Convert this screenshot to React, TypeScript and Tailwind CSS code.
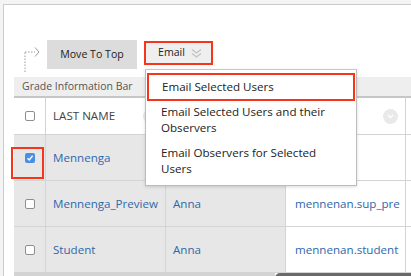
import React from "react";

type Row = {
  last: string;
  first?: string;
  user?: string;
  checked?: boolean;
  highlight?: boolean;
};

// row 1's first name / username sit under the open menu, so they are left empty
const rows: Row[] = [
  { last: "Mennenga", checked: true, highlight: true },
  { last: "Mennenga_Preview", first: "Anna", user: "mennenan.sup_pre" },
  { last: "Student", first: "Anna", user: "mennenan.student" },
];

function Checkbox({ checked }: { checked?: boolean }) {
  if (checked) {
    return (
      <span className="flex h-[10px] w-[10px] items-center justify-center rounded-[2px] bg-[#4a8fe3]">
        <svg width="8" height="8" viewBox="0 0 8 8">
          <polyline points="1.5,4.2 3.3,6 6.6,1.8" fill="none" stroke="#fff" strokeWidth="1.4" />
        </svg>
      </span>
    );
  }
  return <span className="block h-[10px] w-[10px] rounded-[2px] border border-[#8e8e8e] bg-white" />;
}

function SortCircle() {
  return (
    <span className="flex h-[15px] w-[15px] items-center justify-center rounded-full bg-[#e9e9e9]">
      <svg width="7" height="5" viewBox="0 0 7 5">
        <polyline points="1,1 3.5,3.5 6,1" fill="none" stroke="#fff" strokeWidth="1.3" />
      </svg>
    </span>
  );
}

export default function App() {
  return (
    <div
      className="relative h-[276px] w-[411px] overflow-hidden bg-[#f4f4f4] pl-[3px] pt-[4px] text-[#333]"
      style={{ fontFamily: '"Open Sans", "Liberation Sans", sans-serif' }}
    >
      <div className="h-full border-l border-t border-[#cbcbcb] bg-white">
        {/* Toolbar */}
        <div className="flex items-start pl-[19px] pt-[35px]">
          <svg width="18" height="27" viewBox="0 0 18 27" className="mt-[6px]">
            <line x1="2" y1="26" x2="2" y2="6" stroke="#9a9a9a" strokeDasharray="1.5 1.5" />
            <line x1="2" y1="6" x2="12" y2="6" stroke="#9a9a9a" strokeDasharray="1.5 1.5" />
            <polyline points="12,1.5 16,6 12,10.5" fill="none" stroke="#9a9a9a" />
          </svg>
          <div className="ml-[6px] flex h-[29px] w-[90px] items-center justify-center bg-[#dcdcdc] text-[10.6px] text-[#222]">
            Move To Top
          </div>
          <div className="ml-[7px] mt-[1px] flex h-[24px] w-[69px] items-center border-2 border-[#f5361c] bg-[#efefef] pl-[12px] text-[10.6px] text-[#222]">
            Email
            <svg width="11" height="11" viewBox="0 0 11 11" className="ml-[6px]">
              <polyline points="1,1.5 5.5,5 10,1.5" fill="none" stroke="#c2c2c2" strokeWidth="1.3" />
              <polyline points="1,5.5 5.5,9 10,5.5" fill="none" stroke="#c2c2c2" strokeWidth="1.3" />
            </svg>
          </div>
        </div>

        {/* Grade Information Bar */}
        <div className="ml-[10px] mt-[4px] flex h-[21px] items-center border-b-2 border-[#c6c6c6] bg-[#eeeeee] pl-[8px] text-[10.5px] text-[#555]">
          Grade Information Bar
        </div>

        {/* Table */}
        <div className="ml-[10px] grid grid-cols-[32px_120px_120px_120px_1fr] text-[11.6px]">
          {/* header */}
          <div className="flex h-[37px] items-center justify-center border-b border-r border-[#d4d4d4]">
            <Checkbox />
          </div>
          <div className="flex h-[37px] items-center justify-between border-b border-r border-[#d4d4d4] pl-[7px] pr-[7px] text-[#444]">
            LAST NAME
            <SortCircle />
          </div>
          <div className="flex h-[37px] items-center justify-end border-b border-r border-[#d4d4d4] pr-[7px]">
            <SortCircle />
          </div>
          <div className="flex h-[37px] items-center justify-end border-b border-r border-[#d4d4d4] pr-[7px]">
            <SortCircle />
          </div>
          <div className="h-[37px] border-b border-[#d4d4d4]" />

          {rows.map((r) => (
            <React.Fragment key={r.last}>
              <div className="relative flex h-[46px] items-center justify-center border-b border-r border-[#d4d4d4] bg-[#e7e7e7]">
                <Checkbox checked={r.checked} />
                {r.highlight && (
                  <span className="absolute left-[-3px] top-[12px] h-[32px] w-[33px] border-2 border-[#f5361c]" />
                )}
              </div>
              <div className="flex h-[46px] items-center overflow-hidden whitespace-nowrap border-b border-r border-[#d4d4d4] bg-[#e7e7e7] pl-[7px] text-[#2f67ab]">
                {r.last}
              </div>
              <div className="flex h-[46px] items-center overflow-hidden whitespace-nowrap border-b border-r border-[#d4d4d4] bg-[#e7e7e7] pl-[7px] text-[#2f67ab]">
                {r.first}
              </div>
              <div className="flex h-[46px] items-center overflow-hidden whitespace-nowrap border-b border-r border-[#d4d4d4] bg-white pl-[9px] text-[#2f67ab]">
                {r.user}
              </div>
              <div className="h-[46px] border-b border-[#d4d4d4] bg-white" />
            </React.Fragment>
          ))}
        </div>

        {/* Footer */}
        <div className="ml-[10px] flex h-[8px]">
          <div className="w-[261px] bg-[#d3d3d3]" />
          <div className="flex-1 rounded-tl-[5px] bg-[#6a6a6a]" />
        </div>
      </div>

      {/* Email dropdown menu */}
      <div className="absolute left-[145px] top-[69px] w-[212px] border border-[#bcbcbc] border-t-[#b3cde8] bg-white pb-[4px] pt-[3px] text-[11.6px] leading-[16px] text-[#222] shadow-[0_1px_3px_rgba(0,0,0,0.15)]">
        <div className="mx-[1px] border-2 border-[#f5361c] py-[4px] pl-[13px]">Email Selected Users</div>
        <div className="px-[15px] pb-[4px] pt-[3px]">Email Selected Users and their Observers</div>
        <div className="px-[15px] pb-[4px] pt-[5px]">Email Observers for Selected Users</div>
      </div>
    </div>
  );
}
